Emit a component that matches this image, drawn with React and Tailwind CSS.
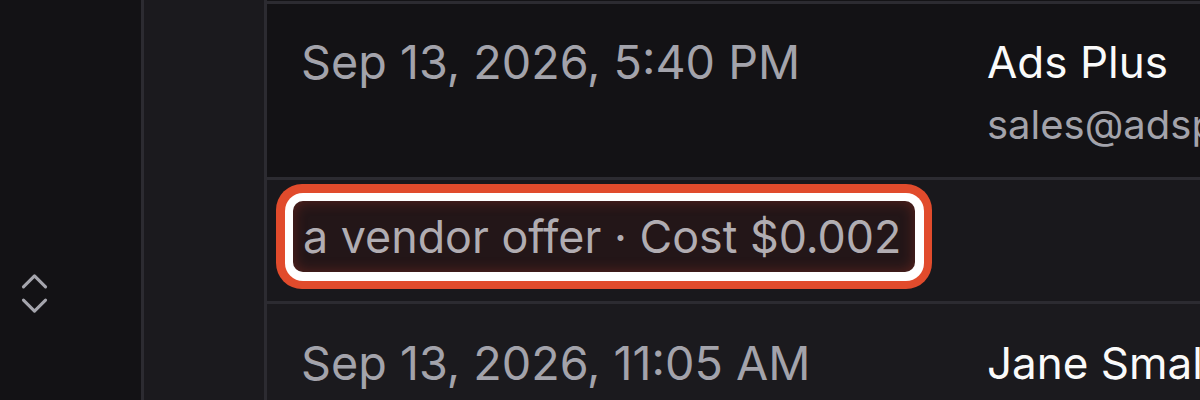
import React from "react";
import { ChevronsUpDown } from "lucide-react";

function DateCell({ children }) {
  return (
    <div className="w-[686px] shrink-0 pl-[34px] text-[46.7px] leading-[70px] text-[#a3a3ab] whitespace-nowrap">
      {children}
    </div>
  );
}

export default function App() {
  return (
    <div
      className="w-[1200px] h-[400px] overflow-hidden flex bg-[#121114]"
      style={{ fontFamily: "Inter, 'Noto Sans', sans-serif" }}
    >
      {/* left rail */}
      <div className="w-[144px] shrink-0 h-full bg-[#131215] border-r-[3px] border-[#2c2b31] pl-[8px] pt-[267px]">
        <ChevronsUpDown size={53} strokeWidth={1.4} className="text-[#a5a5ad]" />
      </div>

      {/* middle column */}
      <div className="w-[123px] shrink-0 h-full bg-[#1b1a1e] border-r-[3px] border-[#2c2b31]" />

      {/* table */}
      <div className="flex-1 min-w-0 flex flex-col">
        <div className="h-[1px] shrink-0 bg-[#141316]" />
        {/* row 1 */}
        <div className="h-[179px] shrink-0 flex border-t-[3px] border-b-[3px] border-[#2c2b31] bg-[#131215] pt-[23px]">
          <DateCell>Sep 13, 2026, 5:40 PM</DateCell>
          <div className="pl-[34px] whitespace-nowrap">
            <div className="text-[44px] leading-[70px] text-[#fafafa]">Ads Plus</div>
            <div className="text-[40px] leading-[56px] text-[#a3a3ab]">sales@adsplus.com</div>
          </div>
        </div>

        {/* row 2 : highlighted note */}
        <div className="h-[124px] shrink-0 border-b-[3px] border-[#2c2b31] bg-[#19181c] pl-[9px] pt-[4px]">
          <div className="inline-flex rounded-[26px] bg-[#e14b2c] p-[8.5px]">
            <div className="flex rounded-[18px] bg-white p-[8.5px]">
              <div className="h-[71px] flex items-center rounded-[10px] bg-[#231618] pl-[10px] pr-[14px] shadow-[inset_0_0_14px_rgba(200,60,40,0.35)]">
                <span className="text-[44.8px] leading-[70px] text-[#b1adb2] whitespace-nowrap">
                  a vendor offer · Cost $0.002
                </span>
              </div>
            </div>
          </div>
        </div>

        {/* row 3 */}
        <div className="flex-1 flex bg-[#1b1a1e] pt-[24px]">
          <DateCell>Sep 13, 2026, 11:05 AM</DateCell>
          <div className="pl-[34px] whitespace-nowrap">
            <div className="text-[44px] leading-[70px] text-[#fafafa]">Jane Smalley</div>
          </div>
        </div>
      </div>
    </div>
  );
}
